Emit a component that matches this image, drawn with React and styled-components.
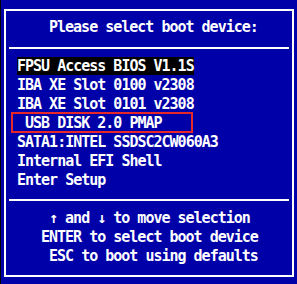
import React from 'react';
import styled, { createGlobalStyle } from 'styled-components';

const GlobalStyle = createGlobalStyle`
    html, body {
        margin: 0;
        padding: 0;
        background: #0000a8;
    }
`;

const items = [
    { label: 'FPSU Access BIOS V1.1S', selected: true },
    { label: 'IBA XE Slot 0100 v2308' },
    { label: 'IBA XE Slot 0101 v2308' },
    { label: ' USB DISK 2.0 PMAP', marked: true },
    { label: 'SATA1:INTEL SSDSC2CW060A3' },
    { label: 'Internal EFI Shell' },
    { label: 'Enter Setup' },
];

const help = [
    ' \u2191 and \u2193 to move selection',
    'ENTER to select boot device',
    ' ESC to boot using defaults',
];

function App() {
    return (
        <Screen>
            <GlobalStyle />
            <Dialog>
                <Title>Please select boot device:</Title>
                <Rule />
                <Menu>
                    {items.map((item) => (
                        <Item key={item.label} $marked={item.marked}>
                            <Label $selected={item.selected}>{item.label}</Label>
                        </Item>
                    ))}
                </Menu>
                <Rule $gap={9} />
                <Help>
                    {help.map((line) => (
                        <HelpLine key={line}>{line}</HelpLine>
                    ))}
                </Help>
            </Dialog>
        </Screen>
    );
}

const Screen = styled.div`
    width: 296px;
    height: 284px;
    background: #0000a8;
    border-left: 1px solid #000;
    padding: 9px 0 0 3px;
    box-sizing: border-box;
    font-family: "DejaVu Sans Mono", monospace;
    font-weight: bold;
    font-size: 15px;
    letter-spacing: -1px;
    line-height: 19px;
    color: #fff;
    white-space: pre;
`;

const Dialog = styled.div`
    width: 290px;
    height: 268px;
    box-sizing: border-box;
    border: 2px solid #fff;
    padding-top: 7px;
    display: flex;
    flex-direction: column;
`;

const Title = styled.div`
    padding-left: 43px;
`;

const Rule = styled.div`
    height: 2px;
    background: #fff;
    margin: ${(p) => p.$gap || 10}px 3px 0;
`;

const Menu = styled.div`
    margin-top: 8px;
    padding-left: 11px;
`;

const Item = styled.div`
    position: relative;
    height: 19px;
    ${(p) => p.$marked && `
        &::after {
            content: '';
            position: absolute;
            left: -6px;
            top: -2px;
            width: 182px;
            height: 21px;
            box-sizing: border-box;
            border: 2px solid #e82828;
        }
    `}
`;

const Label = styled.span`
    background: ${(p) => (p.$selected ? '#000' : 'transparent')};
`;

const Help = styled.div`
    margin-top: 8px;
    padding-left: 35px;
`;

const HelpLine = styled.div`
    height: 19px;
`;

export default App;
